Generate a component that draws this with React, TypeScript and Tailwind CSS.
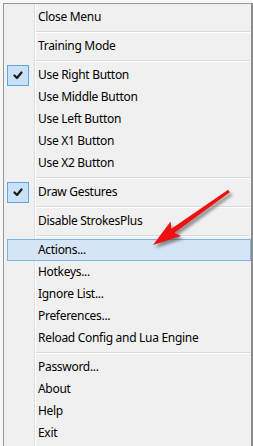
import React from "react";

type Item =
  | { type: "sep" }
  | { type: "item"; label: string; checked?: boolean; hot?: boolean };

const items: Item[] = [
  { type: "item", label: "Close Menu" },
  { type: "sep" },
  { type: "item", label: "Training Mode" },
  { type: "sep" },
  { type: "item", label: "Use Right Button", checked: true },
  { type: "item", label: "Use Middle Button" },
  { type: "item", label: "Use Left Button" },
  { type: "item", label: "Use X1 Button" },
  { type: "item", label: "Use X2 Button" },
  { type: "sep" },
  { type: "item", label: "Draw Gestures", checked: true },
  { type: "sep" },
  { type: "item", label: "Disable StrokesPlus" },
  { type: "sep" },
  { type: "item", label: "Actions...", hot: true },
  { type: "item", label: "Hotkeys..." },
  { type: "item", label: "Ignore List..." },
  { type: "item", label: "Preferences..." },
  { type: "item", label: "Reload Config and Lua Engine" },
  { type: "sep" },
  { type: "item", label: "Password..." },
  { type: "item", label: "About" },
  { type: "item", label: "Help" },
  { type: "item", label: "Exit" },
];

function Check() {
  return (
    <svg width="10" height="9" viewBox="0 0 10 9">
      <path d="M1.5 4.5 L4 7 L8.5 1.5" fill="none" stroke="#1a1a1a" strokeWidth="2.2" strokeLinecap="round" strokeLinejoin="round" />
    </svg>
  );
}

function Arrow() {
  const tail = { x: 229, y: 191 };
  const tip = { x: 153, y: 245 };
  const dx = tip.x - tail.x;
  const dy = tip.y - tail.y;
  const len = Math.hypot(dx, dy);
  const ux = dx / len;
  const uy = dy / len;
  const px = -uy;
  const py = ux;
  const headLen = 28;
  const headHalf = 9;
  const base = { x: tip.x - ux * headLen, y: tip.y - uy * headLen };
  const notch = { x: tip.x - ux * (headLen - 5), y: tip.y - uy * (headLen - 5) };
  const t1 = 1.5;
  const t2 = 2.6;
  const shaft = [
    [tail.x + px * t1, tail.y + py * t1],
    [notch.x + px * t2, notch.y + py * t2],
    [notch.x - px * t2, notch.y - py * t2],
    [tail.x - px * t1, tail.y - py * t1],
  ];
  const head = [
    [tip.x, tip.y],
    [base.x + px * headHalf, base.y + py * headHalf],
    [notch.x, notch.y],
    [base.x - px * headHalf, base.y - py * headHalf],
  ];
  const pts = (a: number[][]) => a.map((p) => p.join(",")).join(" ");
  return (
    <svg className="absolute left-0 top-0 pointer-events-none" width="253" height="446" viewBox="0 0 253 446">
      <defs>
        <filter id="sh" x="-20%" y="-20%" width="140%" height="140%">
          <feGaussianBlur stdDeviation="1.6" />
        </filter>
      </defs>
      <g transform="translate(2.5,3)" filter="url(#sh)" opacity="0.55">
        <polygon points={pts(shaft)} fill="#404040" />
        <polygon points={pts(head)} fill="#404040" />
      </g>
      <polygon points={pts(shaft)} fill="#ee1111" />
      <polygon points={pts(head)} fill="#ee1111" />
    </svg>
  );
}

export default function App() {
  return (
    <div
      className="relative w-[253px] h-[446px] overflow-hidden bg-[#f7f7f7] pt-[3px] pl-[3px]"
      style={{ fontFamily: '"Noto Sans", "Liberation Sans", sans-serif' }}
    >
      <div className="w-[250px] h-[443px] border-l border-t border-[#979797] border-r-2 border-r-[#8c8c8c] bg-[#f0f0f0] bg-[linear-gradient(to_right,transparent_30px,#dedede_30px,#dedede_31px,#ffffff_31px,#ffffff_32px,transparent_32px)] pt-[2px] flex flex-col">
        {items.map((it, i) =>
          it.type === "sep" ? (
            <div key={i} className="h-[7px] flex items-center pl-[32px] pr-[1px]">
              <div className="w-full h-[2px] border-t border-t-[#d9d9d9] border-b border-b-white" />
            </div>
          ) : (
            <div
              key={i}
              className={
                "ml-[3px] h-[22px] flex items-center shrink-0 " +
                (it.hot ? "bg-[#d1e3f5]/90 border border-[#7db2e6]" : "border border-transparent")
              }
            >
              <div className="w-[22px] h-[20px] flex items-center justify-center -ml-px">
                {it.checked && (
                  <div className="w-[22px] h-[21px] bg-[#c9e0f5] border border-[#5ca6e4] flex items-center justify-center">
                    <Check />
                  </div>
                )}
              </div>
              <span className="ml-[9px] text-[12px] tracking-[-0.3px] text-black leading-none whitespace-nowrap">{it.label}</span>
            </div>
          )
        )}
      </div>
      <Arrow />
    </div>
  );
}
